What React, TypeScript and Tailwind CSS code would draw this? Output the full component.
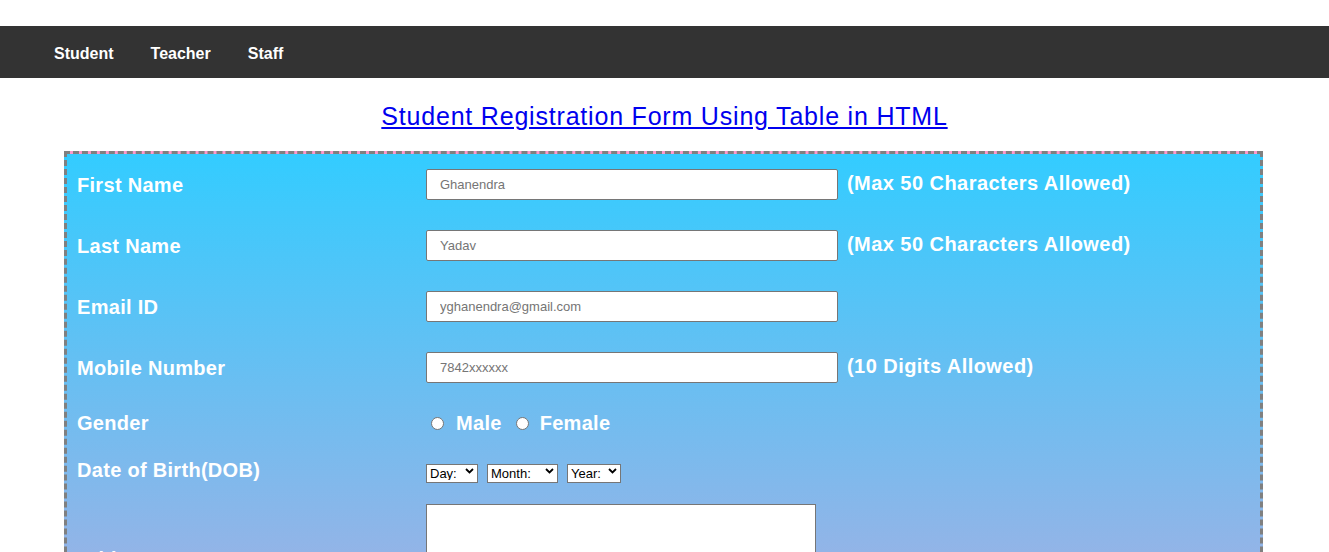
import React from 'react';

const font = "font-['Comic_Sans_MS','Liberation_Sans',sans-serif]";

const Chevron = () => (
  <svg width="9" height="6" viewBox="0 0 9 6" className="pointer-events-none absolute right-[4px] top-1/2 -translate-y-1/2">
    <path d="M1 1 L4.5 4.5 L8 1" fill="none" stroke="#000" strokeWidth="1.8" />
  </svg>
);

const Select = ({ label, width }: { label: string; width: string }) => (
  <div className={`relative ${width} h-[19px]`}>
    <select className="h-full w-full appearance-none border border-[#767676] bg-white pl-[3px] text-[13px] leading-none text-black font-['Liberation_Sans',Arial,sans-serif] outline-none">
      <option>{label}</option>
    </select>
    <Chevron />
  </div>
);

const TextRow = ({ label, placeholder, note }: { label: string; placeholder: string; note?: string }) => (
  <div className="flex h-[61px] items-center">
    <div className="w-[359px] pl-[10px] text-[20px] font-bold tracking-[0.3px] text-white">{label}</div>
    <input
      type="text"
      placeholder={placeholder}
      className="h-[31px] w-[412px] rounded-[2px] border border-[#767676] bg-white pl-[13px] text-[13px] font-['Liberation_Sans',Arial,sans-serif] placeholder:text-[#757575] outline-none"
    />
    {note && <div className="ml-[9px] -mt-[4px] text-[20px] font-bold tracking-[0.45px] text-white">{note}</div>}
  </div>
);

export default function App() {
  return (
    <div className={`bg-white ${font} pt-[26px]`}>
      <nav className="flex h-[52px] items-center gap-[37px] bg-[#333333] pl-[54px] pt-[3px] text-[16px] font-bold text-white">
        <a href="#">Student</a>
        <a href="#">Teacher</a>
        <a href="#">Staff</a>
      </nav>

      <h2 className="mt-[22px] mb-[19px] text-center text-[25px] leading-[32px] tracking-[0.8px]">
        <a href="#" className="text-[#0000ee] underline">Student Registration Form Using Table in HTML</a>
      </h2>

      <div className="ml-[64px] w-[1199px] min-h-[860px] border-[3px] border-dashed border-[#808080] bg-[linear-gradient(#33ccff,#ff99cc)]">
        <TextRow label="First Name" placeholder="Ghanendra" note="(Max 50 Characters Allowed)" />
        <TextRow label="Last Name" placeholder="Yadav" note="(Max 50 Characters Allowed)" />
        <TextRow label="Email ID" placeholder="yghanendra@gmail.com" />
        <TextRow label="Mobile Number" placeholder="7842xxxxxx" note="(10 Digits Allowed)" />

        <div className="flex h-[50px] items-center">
          <div className="w-[359px] pl-[10px] text-[20px] font-bold tracking-[0.3px] text-white">Gender</div>
          <label className="flex items-center text-[20px] font-bold tracking-[0.3px] text-white">
            <span className="ml-[5px] h-[13px] w-[13px] rounded-full border border-[#767676] bg-white" />
            <span className="ml-[12px]">Male</span>
          </label>
          <label className="ml-[14px] flex items-center text-[20px] font-bold tracking-[0.3px] text-white">
            <span className="h-[13px] w-[13px] rounded-full border border-[#767676] bg-white" />
            <span className="ml-[11px]">Female</span>
          </label>
        </div>

        <div className="flex h-[46px] items-center">
          <div className="w-[359px] pl-[10px] text-[20px] font-bold tracking-[0.3px] text-white -mt-[2px]">Date of Birth(DOB)</div>
          <div className="flex items-center gap-[9px] -mt-[1px]">
            <Select label="Day:" width="w-[52px]" />
            <Select label="Month:" width="w-[71px]" />
            <Select label="Year:" width="w-[54px]" />
          </div>
        </div>

        <div className="flex items-center py-[10px]">
          <div className="w-[359px] pl-[10px] text-[20px] font-bold tracking-[0.3px] text-white">Address</div>
          <textarea className="h-[110px] w-[390px] border border-[#767676] bg-white outline-none" />
        </div>

        <div className="flex h-[61px] items-center">
          <div className="w-[359px] pl-[10px] text-[20px] font-bold tracking-[0.3px] text-white">City</div>
          <input
            type="text"
            className="h-[31px] w-[412px] rounded-[2px] border border-[#767676] bg-white outline-none"
          />
        </div>
        <div className="flex h-[61px] items-center">
          <div className="w-[359px] pl-[10px] text-[20px] font-bold tracking-[0.3px] text-white">Pin Code</div>
          <input
            type="text"
            className="h-[31px] w-[412px] rounded-[2px] border border-[#767676] bg-white outline-none"
          />
        </div>
      </div>
    </div>
  );
}
